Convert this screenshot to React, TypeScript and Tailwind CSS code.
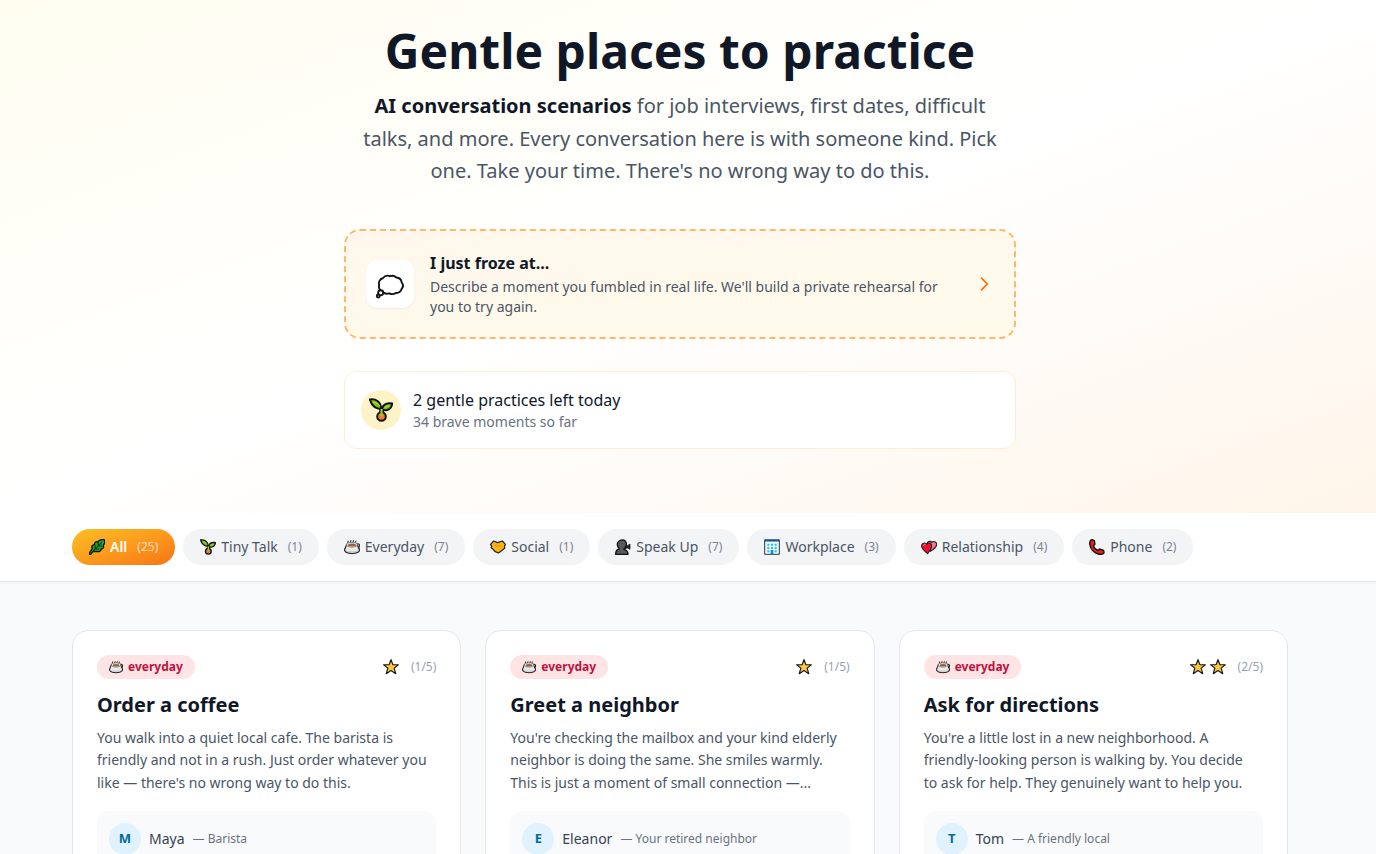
import type { ReactNode } from "react";

type IconName = "leaf" | "sprout" | "cup" | "handshake" | "speak" | "office" | "hearts" | "phone" | "star" | "thought";

const ICONS: Record<IconName, ReactNode> = {
    leaf: (
        <>
            <path d="M1 23l-.5-2L5 14.500c-2-3 0-6 3-6C8 5 10.500 3.500 13 4.500 14.500 1.500 18.500.5 23 1c1 3.500.5 6.500-1.500 8 1 3.500 0 5.500-3 6-1 3.500-4 4.500-7 3.500L6 19l-3.500 4z" fill="#1fa52f" stroke="#111" strokeWidth="2" strokeLinejoin="round" />
            <path d="M3 21.500L19 5M9 8.500v6.500h6.500M13.500 5l.5 5.500h6" fill="none" stroke="#0c3d12" strokeWidth="1.800" />
        </>
    ),
    sprout: (
        <>
            <path d="M12.500 16c0-3 0-4 .5-6" fill="none" stroke="#111" strokeWidth="5" />
            <circle cx="12.500" cy="18.500" r="4.300" fill="#f0793a" stroke="#111" strokeWidth="2" />
            <path d="M12.500 11C7.500 11 3 8.500 .8 1.500c6-.8 10.700 1.500 11.700 9.500z" fill="#7cc211" stroke="#111" strokeWidth="2" strokeLinejoin="round" />
            <path d="M13 11c1-4.500 4-6.500 10.200-5.500-.5 5.500-5.200 8-10.200 6z" fill="#7cc211" stroke="#111" strokeWidth="2" strokeLinejoin="round" />
            <path d="M12.500 18v-7" stroke="#8ed41d" strokeWidth="2.200" />
            <path d="M4 4.500c4 0 6 1.500 7 3.500M20 7.500l-4.500 2" fill="none" stroke="#b5e04d" strokeWidth="1" />
        </>
    ),
    cup: (
        <>
            <path d="M6 5.500c-.8-1.500.8-1.500 0-3M10 5c-.8-1.500.8-1.500 0-3M14 5c-.8-1.500.8-1.500 0-3M17.500 5.500c-.6-1.500.6-1.500 0-3" fill="none" stroke="#333" strokeWidth="1.800" />
            <path d="M20 7.500c3.500-1 4 3 2 5.500" fill="none" stroke="#222" strokeWidth="1.800" />
            <path d="M4.500 7.500C2.500 10 3 12 2 13.500c-2.500 3-.5 6.500 4 7.500 4 1 8 1 12 0 5-1 6.500-4.500 4-7.500-1.500-1.500-.5-3.500-2.500-6z" fill="#e9e9e9" stroke="#222" strokeWidth="1.800" />
            <path d="M3.500 17.500c4 2.500 13 2.500 17 0" fill="none" stroke="#bcbcbc" strokeWidth="1.200" />
            <ellipse cx="12" cy="8.500" rx="8" ry="3.500" fill="#f3f3f3" stroke="#666" strokeWidth="1.200" />
            <ellipse cx="12" cy="9" rx="6" ry="2.200" fill="#a2603a" />
        </>
    ),
    handshake: (
        <>
            <path d="M.8 8L5.500 3l6 2.500L18.500 3l4.700 5-1.500 3 .5 2.500-4 3.500-5.500 4-5.500-2.500-3.500-4-2-1.500 1-2z" fill="#fdb515" stroke="#222" strokeWidth="1.800" strokeLinejoin="round" />
            <path d="M11.500 6L8 10l2 1.500 4-2 5 4" fill="none" stroke="#d98e00" strokeWidth="1.300" />
        </>
    ),
    speak: (
        <>
            <path d="M1 23c0-4.500 1.500-7 5-8v-1.500C3.500 11 3 8 4 5.500 5.500 1.500 12 0 15 2.500c2 2 2.500 4 2 6.500l.5 3c-.5 2-1.500 2.500-4 2v1.500c4 1 6 3.500 6 7.500z" fill="#5a5a5a" stroke="#111" strokeWidth="2" strokeLinejoin="round" />
            <path d="M15 10.500h3l4.500-3v8L18 13h-3z" fill="#222" stroke="#111" strokeWidth="1" />
        </>
    ),
    office: (
        <>
            <path d="M1 1.500h22v21.500H1z" fill="#e8f8ff" stroke="#333" strokeWidth="1.500" />
            <path d="M1 2.300h22" stroke="#18538c" strokeWidth="3" />
            <path d="M5 7h3v3H5zM10.500 7h3v3h-3zM16 7h3v3h-3zM5 12h3v3H5zM10.500 12h3v3h-3zM16 12h3v3h-3zM5 17h3v3H5zM16 17h3v3h-3z" fill="#27bdf5" />
            <path d="M10 16.500h4v6h-4z" fill="#078fdb" />
        </>
    ),
    hearts: (
        <>
            <path d="M14 18.500C10 14 8 11 9 7c1-4 5.500-4.500 7-2 2.500-2.500 7.500-1 7.500 3 0 4-4.500 7.500-9.500 10.500z" fill="#f5788e" stroke="#222" strokeWidth="1.800" />
            <path d="M10 22C5 18 .8 14.500 .8 10.500 .8 6 6 4.500 8.500 8 11 4.500 16.500 6.500 16 11c-.5 4-3 6.500-6 11z" fill="#ee1228" stroke="#222" strokeWidth="1.600" />
            <path d="M4 10c0-2 1.500-2.500 3-1.500" fill="none" stroke="#ff8792" strokeWidth="1.500" />
        </>
    ),
    phone: (
        <path d="M4.500 1l3.500 1.500 1 5.500-2.500 2c1 3 3.500 5.500 6.500 7l3-2 6 2 .5 4c-2 2-5.500 2.500-8.500 1.500C7 20.500 1.500 14.500 1 7c0-3 1.500-5.500 3.500-6z" fill="#dd2220" stroke="#111" strokeWidth="2" strokeLinejoin="round" />
    ),
    star: (
        <path d="M12 1l2.900 7.600h8.100l-6.300 5.100 2.400 8.300-7.100-4.900-7.100 4.900 2.400-8.300L1 8.600h8.100z" fill="#ffc83d" stroke="#1a1a1a" strokeWidth="1.800" strokeLinejoin="round" />
    ),
    thought: (
        <g fill="#fff" stroke="#111" strokeWidth="1.400">
            <path d="M6.500 18c-2.200-1.200-3.200-3-2.700-5-.7-2.500.6-4.700 2.800-5.300 1.300-1.700 3.400-2.300 5.200-1.600 1.800-.6 3.800-.2 5 1 2.200.2 3.700 1.700 3.900 3.600 1.300 1.700 1.200 3.700 0 5-.7 2-2.400 3.100-4.300 3-1.500 1-3.400 1.100-5 .3-1.800.6-3.700.2-4.900-1z" />
            <circle cx="5" cy="18.600" r="1.900" />
            <circle cx="3.200" cy="21" r="1.100" />
        </g>
    ),
};

const Emoji = ({ name, className }: { name: IconName; className: string }) => (
    <svg viewBox="0 0 24 24" className={`shrink-0 ${className}`} aria-hidden="true">
        {ICONS[name]}
    </svg>
);

const categories: { icon: IconName; label: string; count: number }[] = [
    { icon: "leaf", label: "All", count: 25 },
    { icon: "sprout", label: "Tiny Talk", count: 1 },
    { icon: "cup", label: "Everyday", count: 7 },
    { icon: "handshake", label: "Social", count: 1 },
    { icon: "speak", label: "Speak Up", count: 7 },
    { icon: "office", label: "Workplace", count: 3 },
    { icon: "hearts", label: "Relationship", count: 4 },
    { icon: "phone", label: "Phone", count: 2 },
];

interface Scenario {
    title: string;
    text: string;
    level: number;
    name: string;
    role: string;
}

const scenarios: Scenario[] = [
    {
        title: "Order a coffee",
        text: "You walk into a quiet local cafe. The barista is friendly and not in a rush. Just order whatever you like — there's no wrong way to do this.",
        level: 1,
        name: "Maya",
        role: "Barista",
    },
    {
        title: "Greet a neighbor",
        text: "You're checking the mailbox and your kind elderly neighbor is doing the same. She smiles warmly. This is just a moment of small connection —...",
        level: 1,
        name: "Eleanor",
        role: "Your retired neighbor",
    },
    {
        title: "Ask for directions",
        text: "You're a little lost in a new neighborhood. A friendly-looking person is walking by. You decide to ask for help. They genuinely want to help you.",
        level: 2,
        name: "Tom",
        role: "A friendly local",
    },
];

const Hero = () => (
    <section className="bg-gradient-to-br from-[#fffdf0] via-white to-[#fff5ea] pr-4 pt-6 pb-16">
        <div className="mx-auto max-w-2xl">
            <h1 className="text-center text-5xl leading-[54px] font-bold text-gray-900">Gentle places to practice</h1>
            <p className="mt-3 mb-[41px] px-3 text-center text-xl leading-relaxed text-gray-600">
                <strong className="font-bold text-gray-900">AI conversation scenarios</strong> for job interviews, first dates, difficult talks, and more. Every conversation here is with someone kind. Pick one. Take your time. There's no wrong way to do this.
            </p>
            <button className="flex w-full items-center gap-4 rounded-2xl border-2 border-dashed border-[#ffb86a] bg-gradient-to-br from-[#fff7ed] to-[#fffbeb] p-5 text-left">
                <span className="flex size-12 shrink-0 items-center justify-center rounded-xl bg-white shadow-xs">
                    <Emoji name="thought" className="size-8" />
                </span>
                <span className="flex-1">
                    <span className="block text-base font-bold text-gray-900">I just froze at...</span>
                    <span className="mt-0.5 block text-sm text-gray-600">
                        Describe a moment you fumbled in real life. We'll build a private rehearsal for you to try again.
                    </span>
                </span>
                <svg viewBox="0 0 24 24" className="size-5 shrink-0 text-orange-500" fill="none" stroke="currentColor" strokeWidth="2" strokeLinecap="round" strokeLinejoin="round">
                    <path d="M9 5l7 7-7 7" />
                </svg>
            </button>
            <div className="mt-8 flex items-center gap-3 rounded-xl border border-[#ffedd4] bg-white p-4">
                <span className="flex size-10 items-center justify-center rounded-full bg-[#fef3c6]">
                    <Emoji name="sprout" className="size-6" />
                </span>
                <div>
                    <p className="text-base text-gray-900">2 gentle practices left today</p>
                    <p className="text-sm text-gray-500">34 brave moments so far</p>
                </div>
            </div>
        </div>
    </section>
);

const FilterBar = () => (
    <nav className="border-b border-gray-200 bg-white pr-4 shadow-xs">
        <div className="mx-auto flex max-w-7xl gap-2 px-8 py-4">
            {categories.map((c, i) => (
                <button
                    key={c.label}
                    className={
                        i === 0
                            ? "flex items-center gap-[5px] rounded-full bg-gradient-to-br from-[#fbbf24] to-[#f97316] px-[17px] py-2 text-sm font-semibold whitespace-nowrap text-white"
                            : "flex items-center gap-[5px] rounded-full bg-gray-100 px-[17px] py-2 text-sm whitespace-nowrap text-gray-600"
                    }
                >
                    <Emoji name={c.icon} className="size-4" />
                    {c.label}
                    <span className="ml-[5px] text-xs font-normal opacity-70">({c.count})</span>
                </button>
            ))}
        </div>
    </nav>
);

const ScenarioCard = ({ scenario }: { scenario: Scenario }) => (
    <article className="rounded-2xl border border-gray-200 bg-white p-6">
        <div className="flex items-center justify-between">
            <span className="flex items-center gap-[5px] rounded-full bg-[#ffe4e6] px-3 py-1 text-xs font-bold text-[#be123c]">
                <Emoji name="cup" className="size-3.5" />
                everyday
            </span>
            <span className="flex items-center gap-1">
                {Array.from({ length: scenario.level }, (_, i) => (
                    <Emoji key={i} name="star" className="size-4" />
                ))}
                <span className="ml-2 text-xs text-gray-400">({scenario.level}/5)</span>
            </span>
        </div>
        <h2 className="mt-3 text-xl font-bold text-gray-900">{scenario.title}</h2>
        <p className="mt-2 pr-1 text-sm leading-relaxed text-gray-600">{scenario.text}</p>
        <div className="mt-4 flex items-center gap-2 rounded-xl bg-[#f9fafb] p-3">
            <span className="flex size-8 items-center justify-center rounded-full bg-[#e0f2fe] text-[13px] font-bold text-[#0369a1]">
                {scenario.name[0]}
            </span>
            <span className="text-sm text-gray-700">{scenario.name}</span>
            <span className="text-xs text-gray-500">— {scenario.role}</span>
        </div>
    </article>
);

export default function App() {
    return (
        <div className="h-screen overflow-hidden bg-[#f9fafc] font-['Noto_Sans','Open_Sans',sans-serif]">
            <Hero />
            <FilterBar />
            <main className="pr-4">
                <div className="mx-auto grid max-w-7xl grid-cols-3 gap-6 px-8 py-12">
                    {scenarios.map((s) => (
                        <ScenarioCard key={s.title} scenario={s} />
                    ))}
                </div>
            </main>
        </div>
    );
}
